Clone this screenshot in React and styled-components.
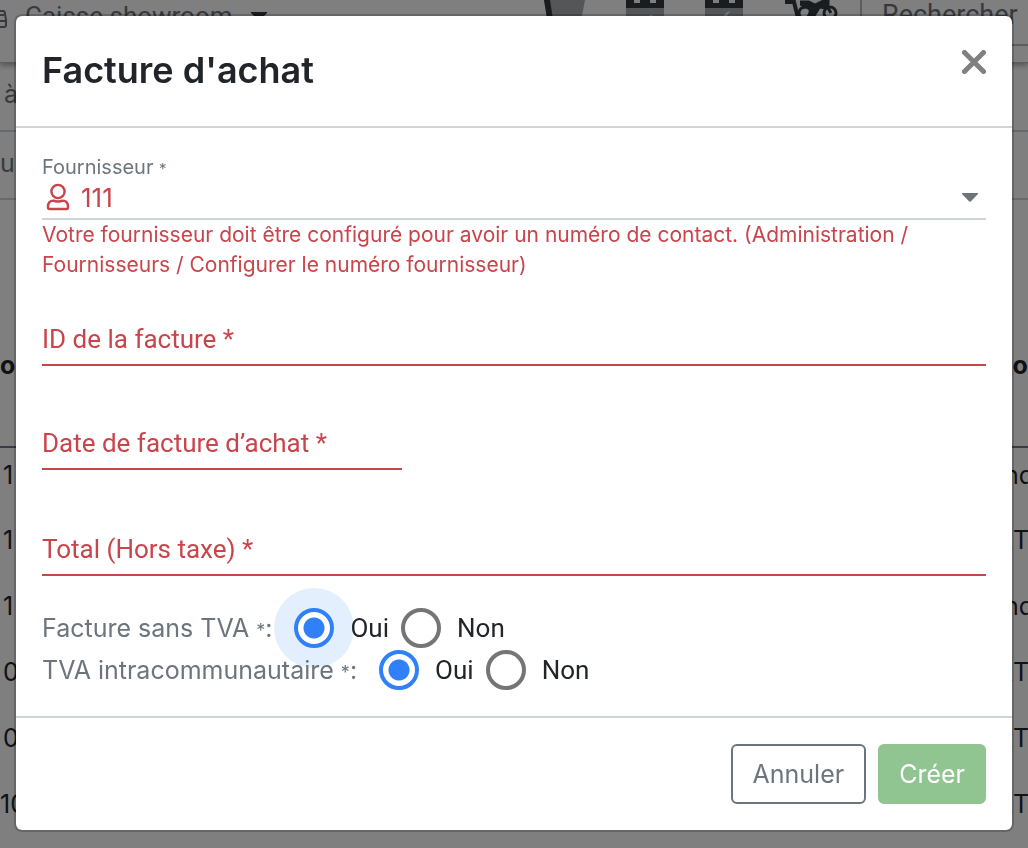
import React, { useState } from "react";
import styled, { createGlobalStyle } from "styled-components";

const red = "#c9444b";
const grey = "#6c757d";
const line = "#ced4da";
const ui = `Inter, "Liberation Sans", sans-serif`;
const material = `Roboto, "Liberation Sans", sans-serif`;

const GlobalStyle = createGlobalStyle`
  * { box-sizing: border-box; }
  body { margin: 0; overflow: hidden; font-family: ${ui}; font-size: 26px; color: #212529; background: #fff; }
  button, input, select { font: inherit; color: inherit; }
`;

/* Page behind the dialog */
const Page = styled.div`
  height: 100vh;
  overflow: hidden;
`;

const TopBar = styled.header`
  display: flex;
  align-items: flex-start;
  height: 63px;
  overflow: hidden;
  border-bottom: 1px solid #bbb;
  box-shadow: 0 2px 6px rgba(0, 0, 0, 0.4);
  color: ${grey};
  line-height: 32px;
`;

const RegisterButton = styled.button`
  display: flex;
  align-items: flex-start;
  gap: 18px;
  padding: 0;
  border: 0;
  background: none;
  font-family: ${material};
  color: ${grey};
  svg { flex: none; }
`;

const Tools = styled.nav`
  display: flex;
  gap: 41px;
  margin-left: auto;
  margin-right: 22px;
`;

const ToolButton = styled.button`
  display: flex;
  padding: 0;
  border: 0;
  background: none;
`;

const Search = styled.input`
  width: 168px;
  height: 46px;
  padding: 0 0 14px 20px;
  border: 0;
  border-left: 2px solid #bbb;
  border-bottom: 2px solid #bbb;
  background: #fff;
  font-family: ${material};
  font-size: 27px;
  &::placeholder { color: ${grey}; opacity: 1; }
`;

const Strip = styled.div`
  height: ${(p) => p.$height}px;
  padding: 13px ${(p) => p.$inset}px;
  border-bottom: 2px solid ${line};
  font-size: 25px;
  line-height: 36px;
  color: ${grey};
`;

const Listing = styled.table`
  width: 100%;
  border-collapse: collapse;
  table-layout: fixed;
  font-size: 25px;
  line-height: 39px;
  white-space: pre;
  th { height: 247px; padding: 0 0 61px; text-align: left; vertical-align: bottom; border-bottom: 2px solid #6c7a88; }
  td { height: 66px; padding: 8px 0; vertical-align: top; }
`;

const KeyCell = styled.td`
  && { padding-left: ${(p) => (p.$wide ? 0 : 3)}px; }
`;

const TailHead = styled.th`
  width: 31px;
`;

/* Dialog */
const Backdrop = styled.div`
  position: fixed;
  inset: 0;
  padding: 14px;
  background: rgba(0, 0, 0, 0.5);
`;

const Dialog = styled.form`
  border: 2px solid rgba(0, 0, 0, 0.2);
  border-radius: 8px;
  background: #fff;
  background-clip: padding-box;
`;

const DialogHeader = styled.div`
  display: flex;
  justify-content: space-between;
  align-items: flex-start;
  height: 112px;
  padding: 26px;
  border-bottom: 2px solid ${line};
`;

const Title = styled.h1`
  margin: 0;
  font-size: 36px;
  font-weight: 600;
  line-height: 56px;
`;

const CloseButton = styled.button`
  display: flex;
  padding: 8px 0;
  border: 0;
  background: none;
`;

const DialogBody = styled.div`
  padding: 24px 26px 26px;
`;

const SmallLabel = styled.label`
  display: block;
  height: 30px;
  font-size: 20px;
  line-height: 30px;
  color: ${grey};
`;

const Star = styled.span`
  font-size: ${(p) => (p.$small ? 15 : 18)}px;
  line-height: 1;
`;

const SelectRow = styled.div`
  display: flex;
  align-items: center;
  height: 38px;
  padding: 0 8px 6px 4px;
  border-bottom: 2px solid ${line};
  color: ${red};
`;

const Select = styled.select`
  flex: 1;
  height: 32px;
  padding: 0 0 0 11px;
  border: 0;
  outline: 0;
  appearance: none;
  background: none;
`;

const Help = styled.p`
  margin: 0;
  font-size: 21px;
  line-height: 30px;
  color: ${red};
`;

const Field = styled.div`
  display: grid;
  width: ${(p) => p.$width || "100%"};
  margin-top: ${(p) => p.$top}px;
  font-family: ${material};
  color: ${red};
`;

const FieldLabel = styled.label`
  grid-area: 1 / 1;
  line-height: 36px;
  pointer-events: none;
`;

const TextInput = styled.input`
  grid-area: 1 / 1;
  width: 100%;
  height: 45px;
  padding: 0;
  border: 0;
  border-bottom: 2px solid ${red};
  outline: 0;
  background: none;
`;

const Choices = styled.div`
  display: grid;
  gap: 2px;
  margin-top: 32px;
`;

const Choice = styled.div`
  display: flex;
  align-items: center;
  height: 40px;
`;

const ChoiceLabel = styled.span`
  margin-right: 22px;
  font-size: 25px;
  line-height: 38px;
  color: ${grey};
`;

const Option = styled.label`
  display: flex;
  align-items: center;
  gap: 16px;
  margin-right: 12px;
  font-family: ${material};
`;

const Radio = styled.input`
  appearance: none;
  width: 40px;
  height: 40px;
  margin: 0;
  border: 4px solid #757575;
  border-radius: 50%;
  outline: 0;
  &:checked {
    border-color: #2f80f9;
    background: radial-gradient(circle, #2f80f9 10px, transparent 11px);
  }
  box-shadow: ${(p) => (p.$halo ? "0 0 0 20px rgba(47, 128, 249, 0.13)" : "none")};
`;

const DialogFooter = styled.div`
  display: flex;
  justify-content: flex-end;
  gap: 12px;
  padding: 26px;
  border-top: 2px solid ${line};
`;

const Button = styled.button`
  height: 60px;
  padding: 0 ${(p) => (p.$primary ? 19 : 20)}px;
  border: 2px solid ${(p) => (p.$primary ? "#90c490" : grey)};
  border-radius: 6px;
  background: ${(p) => (p.$primary ? "#90c490" : "#fff")};
  color: ${(p) => (p.$primary ? "#fff" : grey)};
  font-size: 25px;
`;

const Caret = ({ color = grey }) => (
  <svg width="16" height="9" viewBox="0 0 16 9" aria-hidden="true">
    <path d="M0 0H16V1L8.7 8.4Q8 9 7.3 8.4L0 1Z" fill={color} />
  </svg>
);

const RegisterIcon = () => (
  <svg width="7" height="28" viewBox="0 0 7 28" fill="none" stroke="currentColor" strokeWidth="2" aria-hidden="true">
    <path d="M0 11H3Q5 11 5 14L6 20V25Q6 27 4 27H0M0 15H4M0 21H6" />
  </svg>
);

const CupIcon = () => (
  <svg width="41" height="32" viewBox="0 0 41 32" aria-hidden="true">
    <path d="M0 0H41L35 32H6Z" fill="#a9adb1" />
    <path d="M0 0H6L11 32H5Z" fill="#343a40" />
  </svg>
);

const CalendarIcon = ({ moon }) => (
  <svg width="38" height="32" viewBox="0 0 38 32" aria-hidden="true">
    <path d="M0 8H38V32H0Z" fill="#a9adb1" />
    <path d="M0 0H8V3H14V0H24V3H30V0H38V8H0Z" fill="#343a40" />
    {moon ? (
      <path d="M26 11Q18 12 18 20H22Q21 14 26 11Z" fill="#eee" />
    ) : (
      <path d="M26 14L20 18H26Z" fill="#eee" />
    )}
  </svg>
);

const MotorbikeIcon = () => (
  <svg width="54" height="32" viewBox="0 0 54 32" fill="none" stroke="#343a40" strokeWidth="3" aria-hidden="true">
    <path d="M1 2H10L14 18" strokeWidth="4" />
    <circle cx="21" cy="13" r="6" />
    <circle cx="46" cy="13" r="6" />
    <path d="M16 1H25L31 4L39 0H45V5L42 9L36 8L31 16H23L29 9L16 5" fill="#343a40" strokeWidth="1" />
    <path d="M41 3L47 13M18 8Q23 5 27 9L25 16" />
  </svg>
);

const CloseIcon = () => (
  <svg width="24" height="24" viewBox="0 0 24 24" stroke="#808080" strokeWidth="5" strokeLinecap="round" aria-hidden="true">
    <path d="M2.5 2.5L21.5 21.5M21.5 2.5L2.5 21.5" />
  </svg>
);

const PersonIcon = () => (
  <svg width="24" height="28" viewBox="0 0 24 28" fill="none" stroke="currentColor" strokeWidth="2.4" aria-hidden="true">
    <circle cx="12" cy="8.5" r="6.6" />
    <path d="M7.5 17.6C4 17.4 2 20 2 23.5V24.5Q2 26 3.5 26H20.5Q22 26 22 24.5V23.5C22 20 20 17.4 16.5 17.6C14.5 18.7 9.5 18.7 7.5 17.6Z" />
  </svg>
);

const rows = [
  ["1", " nd"],
  ["1", "RT"],
  ["1", " nd"],
  ["0", "RT"],
  ["0", "RT"],
  ["10", "RT"],
];

function BackgroundPage() {
  return (
    <Page>
      <TopBar>
        <RegisterButton type="button">
          <RegisterIcon />
          Caisse showroom
          <svg width="16" height="22" viewBox="0 0 16 22" aria-hidden="true">
            <path d="M0 12H16V13L8 21L0 13Z" fill="#343a40" />
          </svg>
        </RegisterButton>
        <Tools>
          <ToolButton type="button" aria-label="Boissons"><CupIcon /></ToolButton>
          <ToolButton type="button" aria-label="Agenda"><CalendarIcon /></ToolButton>
          <ToolButton type="button" aria-label="Agenda atelier"><CalendarIcon moon /></ToolButton>
          <ToolButton type="button" aria-label="Motos"><MotorbikeIcon /></ToolButton>
        </Tools>
        <Search placeholder="Rechercher" aria-label="Rechercher" />
      </TopBar>
      <Strip $height={69} $inset={4}>à</Strip>
      <Strip $height={68} $inset={0}>ur</Strip>
      <Listing>
        <thead>
          <tr>
            <th>or</th>
            <TailHead>no</TailHead>
          </tr>
        </thead>
        <tbody>
          {rows.map(([key, tail], i) => (
            <tr key={i}>
              <KeyCell $wide={key.length > 1}>{key}</KeyCell>
              <td>{tail}</td>
            </tr>
          ))}
        </tbody>
      </Listing>
    </Page>
  );
}

function YesNo({ name, label, halo }) {
  const [value, setValue] = useState("Oui");
  return (
    <Choice role="radiogroup" aria-labelledby={`${name}-label`}>
      <ChoiceLabel id={`${name}-label`}>
        {label} <Star>*</Star>:
      </ChoiceLabel>
      {["Oui", "Non"].map((option) => (
        <Option key={option}>
          <Radio
            type="radio"
            name={name}
            checked={value === option}
            onChange={() => setValue(option)}
            $halo={halo && value === option}
          />
          {option}
        </Option>
      ))}
    </Choice>
  );
}

export default function App() {
  return (
    <>
      <GlobalStyle />
      <BackgroundPage />
      <Backdrop>
        <Dialog role="dialog" aria-labelledby="dialog-title" onSubmit={(e) => e.preventDefault()}>
          <DialogHeader>
            <Title id="dialog-title">Facture d'achat</Title>
            <CloseButton type="button" aria-label="Fermer"><CloseIcon /></CloseButton>
          </DialogHeader>
          <DialogBody>
            <SmallLabel htmlFor="supplier">Fournisseur <Star $small>*</Star></SmallLabel>
            <SelectRow>
              <PersonIcon />
              <Select id="supplier" defaultValue="111">
                <option value="111">111</option>
              </Select>
              <Caret />
            </SelectRow>
            <Help>
              Votre fournisseur doit être configuré pour avoir un numéro de contact. (Administration /
              Fournisseurs / Configurer le numéro fournisseur)
            </Help>
            <Field $top={41}>
              <FieldLabel htmlFor="invoice-id">ID de la facture *</FieldLabel>
              <TextInput id="invoice-id" type="text" />
            </Field>
            <Field $top={59} $width="360px">
              <FieldLabel htmlFor="invoice-date">Date de facture d’achat *</FieldLabel>
              <TextInput id="invoice-date" type="text" />
            </Field>
            <Field $top={61}>
              <FieldLabel htmlFor="invoice-total">Total (Hors taxe) *</FieldLabel>
              <TextInput id="invoice-total" type="text" />
            </Field>
            <Choices>
              <YesNo name="without-vat" label="Facture sans TVA" halo />
              <YesNo name="intra-vat" label="TVA intracommunautaire" />
            </Choices>
          </DialogBody>
          <DialogFooter>
            <Button type="button">Annuler</Button>
            <Button type="submit" $primary>Créer</Button>
          </DialogFooter>
        </Dialog>
      </Backdrop>
    </>
  );
}
